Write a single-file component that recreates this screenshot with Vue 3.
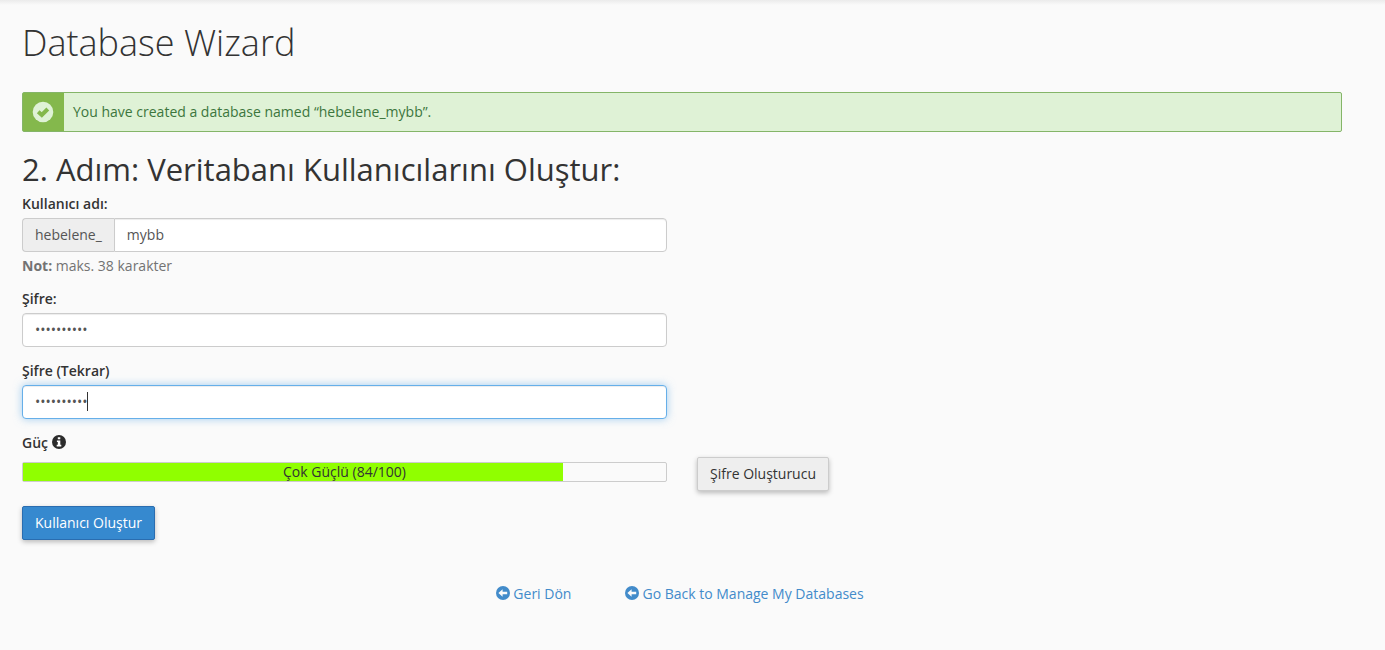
<script setup>
import { ref } from 'vue'

const username = ref('mybb')
const password = ref('abcdefghij')
const passwordAgain = ref('abcdefghij')
const strength = ref(84)
</script>

<template>
  <main class="page">
    <h1 class="page-title">Database Wizard</h1>

    <div class="alert" role="status">
      <span class="alert-icon">
        <svg width="22" height="22" viewBox="0 0 22 22" aria-hidden="true">
          <circle cx="11" cy="11" r="10.3" fill="#dff2d6" />
          <path d="M6.2 10.8 L9.8 14 L15.8 8" fill="none" stroke="#84b84c" stroke-width="4" />
        </svg>
      </span>
      <p class="alert-text">You have created a database named “hebelene_mybb”.</p>
    </div>

    <h2 class="step-title">2. Adım: Veritabanı Kullanıcılarını Oluştur:</h2>

    <form @submit.prevent>
      <div class="row">
        <div class="group">
          <label for="user">Kullanıcı adı:</label>
          <div class="input-group">
            <span class="addon">hebelene_</span>
            <input id="user" v-model="username" class="control joined" type="text" maxlength="38" />
          </div>
          <p class="help"><strong>Not:</strong> maks. 38 karakter</p>
        </div>
      </div>

      <div class="row">
        <div class="group">
          <label for="pass">Şifre:</label>
          <input id="pass" v-model="password" class="control" type="password" />
        </div>
      </div>

      <div class="row">
        <div class="group">
          <label for="pass2">Şifre (Tekrar)</label>
          <div class="active-field">
            <input id="pass2" v-model="passwordAgain" class="control active" type="password" />
            <span class="caret"></span>
          </div>
        </div>
      </div>

      <div class="strength">
        <div class="strength-label">
          <span id="strength-name">Güç</span>
          <svg width="14" height="14" viewBox="0 0 14 14" aria-hidden="true">
            <circle cx="7" cy="7" r="7" fill="#2b2b2b" />
            <path d="M5.8 2.2h2.5v2H5.8zM4.9 5.5h3.4v4.3h1v1.6H4.7V9.8h1.1V7.1h-.9z" fill="#fff" />
          </svg>
        </div>
        <div class="row meter-row">
          <div class="meter" role="meter" aria-labelledby="strength-name" :aria-valuenow="strength" aria-valuemin="0" aria-valuemax="100">
            <div class="meter-fill" :style="{ width: strength + '%' }"></div>
            <span class="meter-text">Çok Güçlü ({{ strength }}/100)</span>
          </div>
          <button type="button" class="btn">Şifre Oluşturucu</button>
        </div>
      </div>

      <button type="submit" class="btn primary">Kullanıcı Oluştur</button>
    </form>

    <nav class="links">
      <a href="#back">
        <svg width="14" height="14" viewBox="0 0 14 14" aria-hidden="true">
          <circle cx="7" cy="7" r="7" fill="#428bca" />
          <path d="M2.4 7 L6.6 3.2 V5.7 H11.2 V8.3 H6.6 V10.8 Z" fill="#fafafa" />
        </svg>
        <span>Geri Dön</span>
      </a>
      <a href="#databases">
        <svg width="14" height="14" viewBox="0 0 14 14" aria-hidden="true">
          <circle cx="7" cy="7" r="7" fill="#428bca" />
          <path d="M2.4 7 L6.6 3.2 V5.7 H11.2 V8.3 H6.6 V10.8 Z" fill="#fafafa" />
        </svg>
        <span>Go Back to Manage My Databases</span>
      </a>
    </nav>
  </main>
</template>

<style>
body {
  background: #fafafa;
}
</style>

<style scoped>
* {
  box-sizing: border-box;
}

.page {
  padding: 23px 43px 20px 22px;
  background: linear-gradient(#ebebeb, #fafafa 5px);
  color: #333;
  font: 14px/20px "Open Sans", "Noto Sans", sans-serif;
}

.page-title {
  margin: 0 0 29px;
  font-size: 36px;
  line-height: 40px;
  font-weight: 300;
}

.alert {
  display: flex;
  border: 1px solid #84b568;
  border-radius: 2px;
  background: #dff2d6;
  color: #3c763d;
}

.alert-icon {
  display: flex;
  align-items: center;
  justify-content: center;
  width: 41px;
  padding-right: 1px;
  background: #84b84c;
}

.alert-text {
  margin: 0;
  padding: 9px;
}

.step-title {
  margin: 20px 0 8px;
  font-size: 31px;
  line-height: 34px;
  font-weight: 400;
}

.row {
  display: grid;
  grid-template-columns: 1fr 1fr;
  column-gap: 30px;
}

.group {
  margin-bottom: 14px;
}

label,
.strength-label {
  display: block;
  margin-bottom: 4px;
  font-weight: 600;
}

.control {
  display: block;
  width: 100%;
  height: 34px;
  padding: 5px 12px 7px;
  border: 1px solid #ccc;
  border-radius: 4px;
  outline: none;
  background: #fff;
  box-shadow: inset 0 1px 1px rgba(0, 0, 0, 0.075);
  color: #555;
  font: inherit;
}

.input-group {
  display: flex;
}

.addon {
  padding: 6px 12px;
  border: 1px solid #ccc;
  border-right: 0;
  border-radius: 4px 0 0 4px;
  background: #eee;
  color: #555;
}

.joined {
  flex: 1;
  min-width: 0;
  border-radius: 0 4px 4px 0;
}

.help {
  margin: 4px 0 -1px;
  color: #737373;
}

.active-field {
  position: relative;
}

.active {
  border-color: #66afe9;
  box-shadow: inset 0 1px 1px rgba(0, 0, 0, 0.075), 0 0 8px rgba(102, 175, 233, 0.6);
}

.caret {
  position: absolute;
  top: 7px;
  left: 65px;
  width: 1px;
  height: 19px;
  background: #333;
}

.strength-label {
  display: flex;
  align-items: center;
  gap: 4px;
  margin: 0;
}

.strength-label svg,
.links svg {
  margin-bottom: 2px;
}

.meter-row {
  align-items: start;
  justify-items: start;
  margin: 4px 0 15px;
}

.meter {
  position: relative;
  width: 100%;
  height: 20px;
  margin-top: 5px;
  border: 1px solid #ccc;
  border-radius: 2px;
}

.meter-fill {
  height: 100%;
  background: #90ff00;
}

.meter-text {
  position: absolute;
  inset: 0;
  line-height: 18px;
  text-align: center;
}

.btn {
  padding: 6px 12px;
  border: 1px solid #ccc;
  border-radius: 2px;
  background: #eee;
  box-shadow: 0 2px 5px rgba(0, 0, 0, 0.26);
  color: #333;
  font: inherit;
}

.primary {
  border-color: #2a6db0;
  background: #3689cf;
  color: #fff;
}

.links {
  display: flex;
  justify-content: center;
  gap: 54px;
  margin-top: 44px;
  padding-right: 4px;
}

.links a {
  display: flex;
  align-items: center;
  gap: 3px;
  color: #428bca;
  text-decoration: none;
}
</style>
